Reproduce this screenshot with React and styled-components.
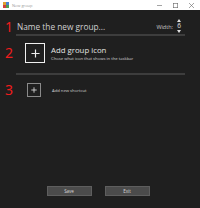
import React from "react";
import styled, { createGlobalStyle } from "styled-components";

const Global = createGlobalStyle`
  html, body { margin: 0; padding: 0; background: #1f1f1f; }
  body { font-family: "Open Sans", "Liberation Sans", sans-serif; }
`;

const Window = styled.div`
  width: 200px;
  height: 208px;
  display: flex;
  flex-direction: column;
  background: #1f1f1f;
  overflow: hidden;
`;

const TitleBar = styled.div`
  height: 10px;
  background: #ffffff;
  display: flex;
  align-items: center;
  padding-left: 3px;
  gap: 3px;
  font-size: 4px;
  color: #9a9a9a;
`;

const TitleText = styled.span`
  flex: 1;
`;

const Controls = styled.div`
  display: flex;
  align-items: center;
  gap: 11px;
  padding-right: 6px;
`;

const Body = styled.div`
  flex: 1;
  display: flex;
  flex-direction: column;
  padding: 10px 15px 0 5px;
`;

const Row = styled.div`
  display: flex;
  align-items: center;
  height: ${(p) => p.$h}px;
  margin-top: ${(p) => p.$mt || 0}px;
`;

const Num = styled.span`
  width: 12px;
  color: #f01c1c;
  font-size: 14px;
  line-height: 14px;
  font-family: "Noto Sans", sans-serif;
`;

const NameInput = styled.div`
  flex: 1;
  color: #d0d0d0;
  font-size: 8.3px;
  line-height: 12px;
`;

const WidthLabel = styled.span`
  color: #c8c8c8;
  font-size: 5.5px;
  margin-right: 3px;
`;

const Spinner = styled.div`
  display: flex;
  flex-direction: column;
  align-items: center;
  gap: 1px;
  width: 6px;
  color: #e0e0e0;
  font-size: 6.5px;
  line-height: 6px;
  margin-right: 3px;
  margin-top: -2px;
`;

const Divider = styled.div`
  height: 2px;
  background: #3d3d3d;
  margin-top: ${(p) => p.$mt || 0}px;
  margin-left: 11px;
`;

const IconBox = styled.div`
  box-sizing: border-box;
  width: ${(p) => p.$size}px;
  height: ${(p) => p.$size}px;
  border: 1px solid ${(p) => p.$border};
  display: flex;
  align-items: center;
  justify-content: center;
  margin-left: ${(p) => p.$ml}px;
  flex-shrink: 0;
`;

const Texts = styled.div`
  display: flex;
  flex-direction: column;
  margin-left: ${(p) => p.$ml}px;
`;

const Heading = styled.span`
  color: #e4e4e4;
  font-size: 7.8px;
  line-height: 11px;
`;

const Sub = styled.span`
  color: #cfcfcf;
  font-size: 4.2px;
  line-height: 5px;
  white-space: nowrap;
`;

const Buttons = styled.div`
  margin-top: auto;
  margin-bottom: 12px;
  display: flex;
  justify-content: center;
  gap: 13px;
  padding-left: 6px;
`;

const Button = styled.div`
  box-sizing: border-box;
  width: 45px;
  height: 10px;
  background: #4b4b4b;
  border: 1px solid #5e5e5e;
  color: #d8d8d8;
  font-size: 4.5px;
  display: flex;
  align-items: center;
  justify-content: center;
`;

const Plus = ({ size, color, w }) => (
  <svg width={size} height={size} viewBox="0 0 10 10">
    <path d="M5 0.5V9.5M0.5 5H9.5" stroke={color} strokeWidth={w} />
  </svg>
);

const Tri = ({ down }) => (
  <svg width="4" height="3" viewBox="0 0 4 3">
    <path d={down ? "M0 0H4L2 3Z" : "M0 3H4L2 0Z"} fill="#e0e0e0" />
  </svg>
);

export default function App() {
  return (
    <Window>
      <Global />
      <TitleBar>
        <svg width="6" height="6" viewBox="0 0 6 6">
          <rect x="0" y="0" width="3" height="3" fill="#e0a030" />
          <rect x="3" y="0" width="3" height="3" fill="#4a7fd0" />
          <rect x="0" y="3" width="3" height="3" fill="#d04040" />
          <rect x="3" y="3" width="3" height="3" fill="#50a050" />
        </svg>
        <TitleText>New group</TitleText>
        <Controls>
          <svg width="5" height="5" viewBox="0 0 5 5">
            <path d="M0 2.5H5" stroke="#666" strokeWidth="0.6" />
          </svg>
          <svg width="5" height="5" viewBox="0 0 5 5">
            <rect x="0.3" y="0.3" width="4.4" height="4.4" fill="none" stroke="#666" strokeWidth="0.6" />
          </svg>
          <svg width="5" height="5" viewBox="0 0 5 5">
            <path d="M0 0L5 5M5 0L0 5" stroke="#666" strokeWidth="0.6" />
          </svg>
        </Controls>
      </TitleBar>
      <Body>
        <Row $h={14}>
          <Num>1</Num>
          <NameInput>Name the new group...</NameInput>
          <WidthLabel>Width:</WidthLabel>
          <Spinner>
            <Tri />
            <span>6</span>
            <Tri down />
          </Spinner>
        </Row>
        <Divider />
        <Row $h={20} $mt={7}>
          <Num>2</Num>
          <IconBox $size={20} $border="#f0f0f0" $ml={8}>
            <Plus size={9} color="#f0f0f0" w={1.3} />
          </IconBox>
          <Texts $ml={6}>
            <Heading>Add group icon</Heading>
            <Sub>Chose what icon that shows in the taskbar</Sub>
          </Texts>
        </Row>
        <Divider $mt={10} />
        <Row $h={14} $mt={8}>
          <Num>3</Num>
          <IconBox $size={14} $border="#8a8a8a" $ml={10}>
            <Plus size={6} color="#e0e0e0" w={1.4} />
          </IconBox>
          <Texts $ml={11}>
            <Sub>Add new shortcut</Sub>
          </Texts>
        </Row>
        <Buttons>
          <Button>Save</Button>
          <Button>Exit</Button>
        </Buttons>
      </Body>
    </Window>
  );
}
